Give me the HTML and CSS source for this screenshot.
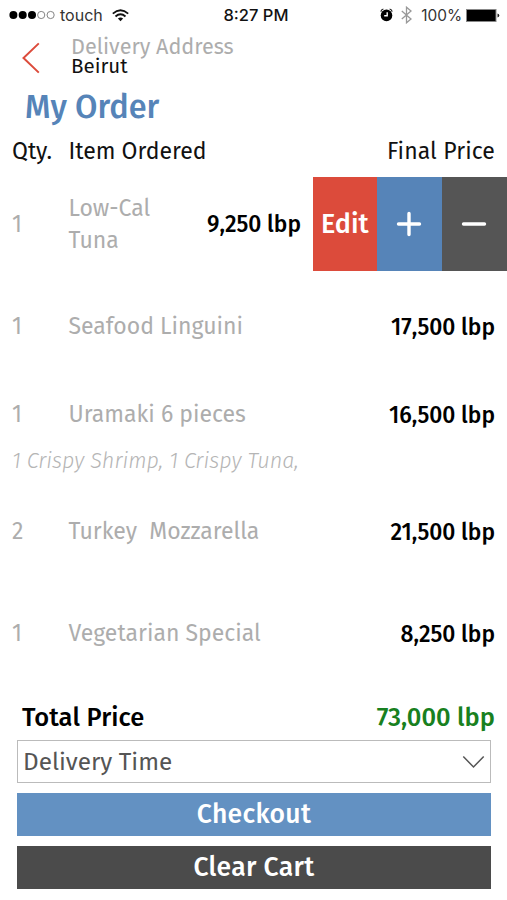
FILE: index.html
```html
<!DOCTYPE html>
<html lang="en">
<head>
<meta charset="utf-8">
<meta name="viewport" content="width=device-width, initial-scale=1">
<title>My Order</title>
<link rel="stylesheet" href="styles.css">
</head>
<body>
<div class="screen">
  <div class="status">
    <div class="carrier">
      <svg width="47" height="10" viewBox="0 0 47 10"><g fill="#000"><circle cx="4.400" cy="5" r="4"/><circle cx="13.700" cy="5" r="4"/><circle cx="23" cy="5" r="4"/></g><g fill="none" stroke="#777" stroke-width=".9"><circle cx="32.200" cy="5" r="3.600"/><circle cx="41.600" cy="5" r="3.600"/></g></svg>
      <span class="network">touch</span>
      <svg width="17" height="13" viewBox="0 0 17 13"><g fill="none" stroke="#111" stroke-width="1.800"><path d="M.8 4.600Q8.500-2 16.200 4.600"/><path d="M3.500 7.500Q8.500 3.100 13.500 7.500"/></g><path d="M5.900 9.600Q8.500 7.400 11.100 9.600L8.500 12.300Z" fill="#111"/></svg>
    </div>
    <span class="clock">8:27 PM</span>
    <div class="power">
      <svg width="13" height="14" viewBox="0 0 13 14"><circle cx="6.500" cy="7.400" r="5.800" fill="#000"/><path d="M.8 3.600Q1.300 1.400 3.400 1M12.200 3.600Q11.700 1.400 9.600 1" fill="none" stroke="#222" stroke-width="1.200"/><path d="M7.200 4.300V7.800H4.200" fill="none" stroke="#fff" stroke-width="1.400"/></svg>
      <svg class="bluetooth" width="11" height="18" viewBox="0 0 11 18"><path d="M.8 5L10 13L5.500 16.800V1.200L10 5L.8 13" fill="none" stroke="#999" stroke-width="1.300"/></svg>
      <span class="percent">100%</span>
      <svg width="34" height="13" viewBox="0 0 34 13"><rect x=".5" y=".5" width="29.500" height="12" fill="#000" stroke="#888"/><path d="M31.500 4.500Q33.300 5 33.300 6.500T31.500 8.500Z" fill="#222"/></svg>
    </div>
  </div>

  <header class="address">
    <svg class="back" width="18" height="32" viewBox="0 0 18 32"><path d="M16.800 1.400L1.500 16L16.800 30.600" fill="none" stroke="#dc4b3b" stroke-width="2"/></svg>
    <div class="place">
      <div class="place-label">Delivery Address</div>
      <div class="place-name">Beirut</div>
    </div>
  </header>

  <h1 class="title">My Order</h1>

  <div class="row head">
    <span class="qty">Qty.</span><span class="name">Item Ordered</span><span class="last">Final Price</span>
  </div>

  <div class="row swiped">
    <span class="qty">1</span><span class="name narrow">Low-Cal Tuna</span><span class="price">9,250 lbp</span>
    <div class="actions">
      <div class="action edit">Edit</div>
      <div class="action plus"><svg width="26" height="26" viewBox="0 0 26 26"><path d="M2.500 13H23.500M13 2.500V23.500" stroke="#fff" stroke-width="3.400" stroke-linecap="round"/></svg></div>
      <div class="action minus"><svg width="26" height="26" viewBox="0 0 26 26"><path d="M2.500 13H23.500" stroke="#fff" stroke-width="3.400" stroke-linecap="round"/></svg></div>
    </div>
  </div>
  <div class="row linguini">
    <span class="qty">1</span><span class="name">Seafood Linguini</span><span class="price">17,500 lbp</span>
  </div>
  <div class="row uramaki">
    <span class="qty">1</span><span class="name">Uramaki 6 pieces</span><span class="price">16,500 lbp</span>
  </div>
  <div class="note">1 Crispy Shrimp, 1 Crispy Tuna,</div>
  <div class="row">
    <span class="qty">2</span><span class="name">Turkey&nbsp; Mozzarella</span><span class="price">21,500 lbp</span>
  </div>
  <div class="row">
    <span class="qty">1</span><span class="name">Vegetarian Special</span><span class="price">8,250 lbp</span>
  </div>

  <div class="total"><span class="total-label">Total Price</span><span class="sum">73,000 lbp</span></div>

  <div class="controls">
    <div class="select"><span>Delivery Time</span>
      <svg width="23" height="14" viewBox="0 0 23 14"><path d="M1.300 1.500L11.500 12L21.700 1.500" fill="none" stroke="#555" stroke-width="1.500"/></svg>
    </div>
    <div class="button checkout">Checkout</div>
    <div class="button clear">Clear Cart</div>
  </div>
</div>
</body>
</html>
```
FILE: styles.css
```css
* { box-sizing: border-box; }
body { margin: 0; background: #fff; color: #111; font-family: "Fira Sans", "Noto Sans", sans-serif; font-size: 23px; }
svg { display: block; flex: none; }
.screen { width: 507px; height: 900px; overflow: hidden; white-space: nowrap; }

.status { display: grid; grid-template-columns: 1fr auto 1fr; align-items: center; height: 30px; padding: 0 7px 0 9px; font-family: Inter, sans-serif; font-size: 16px; }
.carrier, .power { display: flex; align-items: center; }
.network { margin: 0 9px 0 4px; color: #333; }
.clock { font-weight: 500; font-size: 16.5px; padding-left: 3px; }
.power { justify-content: flex-end; }
.bluetooth { margin: 0 9px 0 8px; }
.percent { margin-right: 4px; color: #333; font-size: 15.4px; }

.address { display: flex; height: 55px; padding: 12px 0 0 22px; }
.place { margin-left: 31px; margin-top: -5px; }
.place-label { height: 20px; line-height: 20px; color: #adadad; font-size: 21.6px; }
.place-name { height: 19px; line-height: 19px; font-size: 20.5px; }

.title { height: 44px; margin: 0; padding-left: 25px; line-height: 45px; color: #5684b8; font-size: 32.5px; font-weight: 500; }

.row { display: flex; align-items: center; height: 102px; padding: 0 12px; color: #adadad; }
.head { height: 44px; color: #111; }
.qty { width: 56.5px; flex: none; }
.price, .last { margin-left: auto; }
.last { letter-spacing: .1px; }
.price { padding-top: 2px; color: #000; font-weight: 500; font-size: 22.8px; }
.swiped { height: 94px; margin-top: 3.5px; padding-right: 0; }
.narrow { width: 100px; line-height: 32px; white-space: normal; }
.actions { display: flex; width: 194.5px; height: 94px; margin-left: 11.5px; color: #fff; }
.action { display: flex; align-items: center; justify-content: center; flex: 1; }
.edit { background: #dc4b3b; font-size: 27px; font-weight: 500; }
.plus { background: #5684b8; }
.minus { background: #555; }
.plus svg, .minus svg { margin-right: 1px; }
.linguini { height: 88px; margin-top: 11.5px; }
.uramaki { height: 64px; margin-top: 12px; }
.note { height: 34px; padding-left: 12px; line-height: 30px; color: #b5b5b5; font-size: 21.6px; font-style: italic; font-weight: 300; }

.total { display: flex; justify-content: space-between; height: 56px; padding: 0 12px 0 22px; line-height: 68px; color: #000; font-size: 25.5px; font-weight: 500; }
.total-label { letter-spacing: .1px; }
.sum { color: #188020; }

.controls { display: grid; gap: 10px; padding: 0 16px 0 17px; }
.select { display: flex; align-items: center; justify-content: space-between; height: 43px; padding: 0 5px; border: 1px solid #bbb; color: #555; font-size: 24.3px; }
.button { height: 43px; line-height: 43px; color: #fff; text-align: center; font-size: 26.5px; font-weight: 500; letter-spacing: .3px; }
.checkout { background: #6391c2; }
.clear { background: #4b4b4b; }
```
